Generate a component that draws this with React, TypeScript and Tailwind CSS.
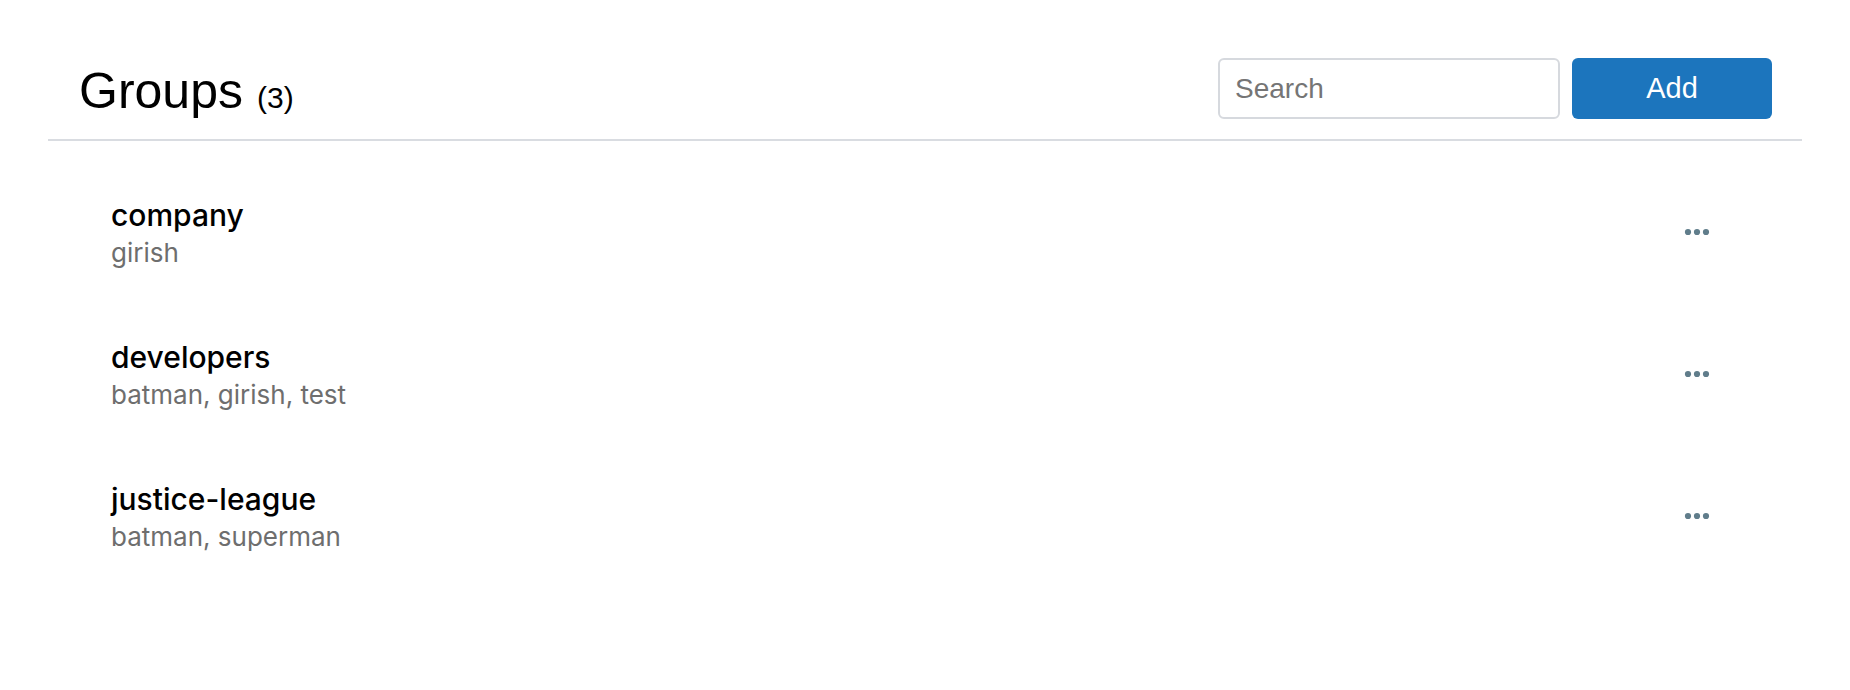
import React from "react";

const groups = [
  { name: "company", members: "girish" },
  { name: "developers", members: "batman, girish, test" },
  { name: "justice-league", members: "batman, superman" },
];

function Dots() {
  return (
    <svg width="26" height="8" viewBox="0 0 26 8" aria-hidden="true">
      <circle cx="4" cy="4" r="3.1" fill="#607d8b" />
      <circle cx="13" cy="4" r="3.1" fill="#607d8b" />
      <circle cx="22" cy="4" r="3.1" fill="#607d8b" />
    </svg>
  );
}

export default function App() {
  return (
    <div className="min-h-[690px] w-full bg-white px-12 pt-[58px]">
      <div className="flex items-center justify-between border-b-2 border-[#d9dce1] pl-[31px] pr-[30px] pb-[20px]">
        <div
          className="mt-[4px] flex items-baseline gap-[14px] text-black"
          style={{ fontFamily: '"Liberation Sans", Arial, sans-serif' }}
        >
          <span className="text-[50px] leading-[48px]">Groups</span>
          <span className="text-[30px] leading-[26px]">(3)</span>
        </div>
        <div
          className="flex items-center gap-[12px]"
          style={{ fontFamily: '"Liberation Sans", Arial, sans-serif' }}
        >
          <input
            type="text"
            placeholder="Search"
            className="h-[61px] w-[342px] rounded-[6px] border-2 border-[#d6d9de] bg-white px-[15px] text-[28px] text-black outline-none placeholder:text-[#757575]"
          />
          <button className="h-[61px] w-[200px] rounded-[6px] bg-[#1c75bd] text-[29px] text-white">
            Add
          </button>
        </div>
      </div>
      <div className="pt-[21px]" style={{ fontFamily: 'Inter, "Noto Sans", sans-serif' }}>
        {groups.map((g) => (
          <div key={g.name} className="flex items-center justify-between py-[35px] pl-[63px] pr-[92px]">
            <div className="flex flex-col">
              <span className="text-[30px] font-medium leading-[36px] text-black">{g.name}</span>
              <span className="mt-[4px] text-[26px] leading-[32px] text-[#6e6e6e]">{g.members}</span>
            </div>
            <button className="mb-[3px] flex items-center">
              <Dots />
            </button>
          </div>
        ))}
      </div>
    </div>
  );
}
